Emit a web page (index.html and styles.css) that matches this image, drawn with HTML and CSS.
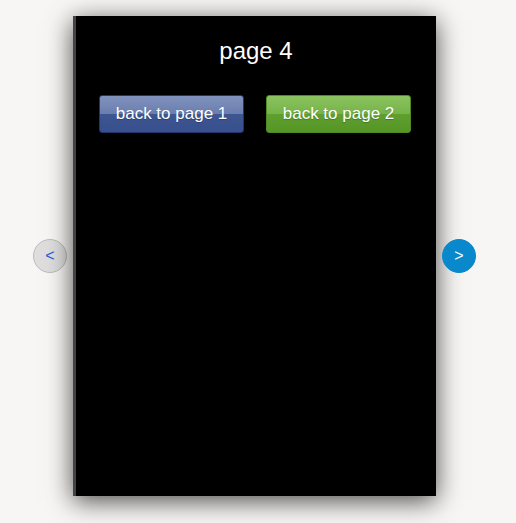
FILE: index.html
```html
<!DOCTYPE html>
<html lang="en">
<head>
    <meta charset="UTF-8">
    <meta name="viewport" content="width=device-width, initial-scale=1.0">
    <title>page 4</title>
    <link rel="stylesheet" href="styles.css">
</head>
<body>
    <div class="stage">
        <!-- previous page -->
        <button class="nav nav-prev">&lt;</button>

        <div class="page">
            <h1>page 4</h1>
            <div class="actions">
                <button class="btn btn-blue">back to page 1</button>
                <button class="btn btn-green">back to page 2</button>
            </div>
        </div>

        <!-- next page -->
        <button class="nav nav-next">&gt;</button>
    </div>
</body>
</html>
```

FILE: styles.css
```css
* { margin: 0; padding: 0; box-sizing: border-box; }
body {
    font-family: "Liberation Sans", Arial, sans-serif;
    background: #f7f6f4;
    height: 523px; overflow: hidden;
}
.stage {
    display: flex; align-items: center;
    padding: 16px 0 0 33px;
}
.page {
    width: 363px; height: 480px; margin: 0 6px;
    background: #000; border-left: 3px solid #444;
    box-shadow: 0 5px 24px rgba(0,0,0,0.7);
    color: #fff; text-align: center;
}
.page h1 {
    font-size: 24px; font-weight: normal; line-height: 28px;
    padding-top: 21px;
}
.actions {
    display: flex; justify-content: center; gap: 22px;
    margin-top: 30px; padding-right: 2px;
}
.btn {
    width: 145px; height: 38px; border-radius: 3px;
    font-family: inherit; font-size: 17px; color: #fff;
    text-shadow: 0 1px 1px rgba(0,0,0,0.25); cursor: pointer;
}
.btn-blue {
    border: 1px solid #22336e;
    background: linear-gradient(#8192bd 0%, #6a7eaf 49%, #3d5692 51%, #37508d 100%);
}
.btn-green {
    border: 1px solid #4f8a24;
    background: linear-gradient(#8bc360 0%, #76b348 49%, #5f9f2f 51%, #559626 100%);
}
.nav {
    width: 34px; height: 34px; border-radius: 50%;
    font-family: inherit; font-size: 16px; cursor: pointer;
}
.nav-prev { background: #dedede; border: 1px solid #bcbcbc; color: #2a55d8; }
.nav-next { background: #0a88cc; border: 1px solid #0a88cc; color: #fff; }
```
